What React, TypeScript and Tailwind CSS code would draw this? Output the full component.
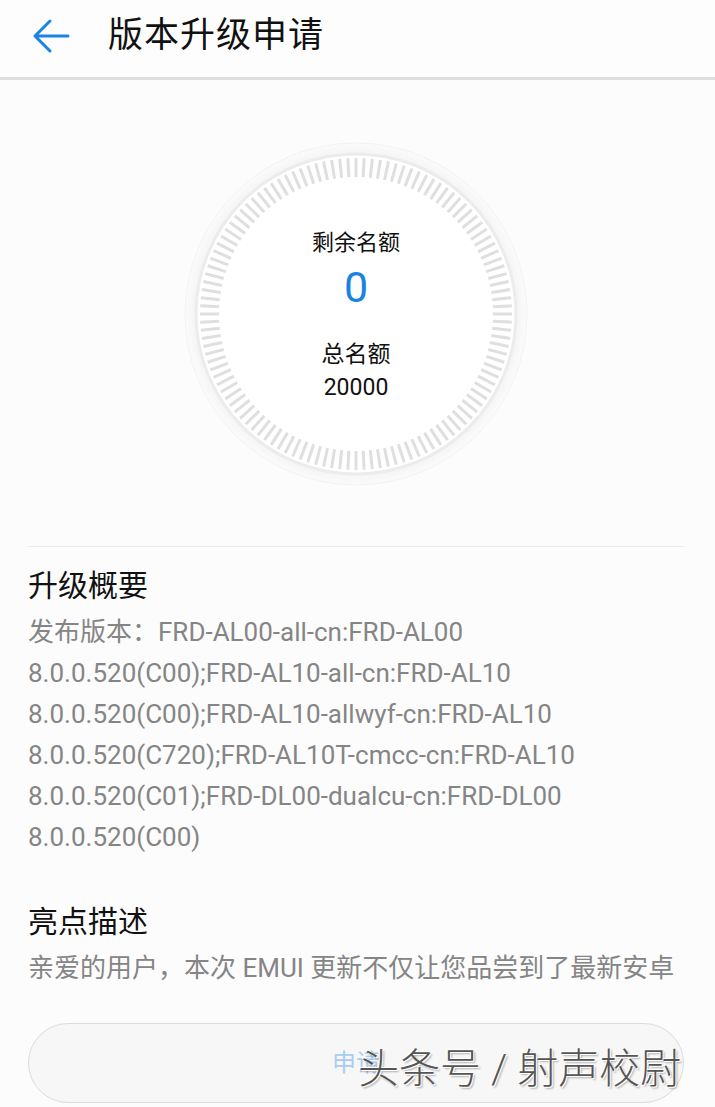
import React from "react";

const FONT = { fontFamily: "Roboto, 'Noto Sans CJK SC', sans-serif" };

const VERSION_LINES = [
  "发布版本：FRD-AL00-all-cn:FRD-AL00",
  "8.0.0.520(C00);FRD-AL10-all-cn:FRD-AL10",
  "8.0.0.520(C00);FRD-AL10-allwyf-cn:FRD-AL10",
  "8.0.0.520(C720);FRD-AL10T-cmcc-cn:FRD-AL10",
  "8.0.0.520(C01);FRD-DL00-dualcu-cn:FRD-DL00",
  "8.0.0.520(C00)",
];

function Dial() {
  const ticks = Array.from({ length: 120 }, (_, i) => i * 3);
  return (
    <svg width="344" height="344" viewBox="0 0 344 344" className="block">
      <defs>
        <radialGradient id="halo" cx="50%" cy="50%" r="50%">
          <stop offset="88%" stopColor="#efefef" />
          <stop offset="94%" stopColor="#f5f5f5" />
          <stop offset="100%" stopColor="#fbfbfb" />
        </radialGradient>
      </defs>
      <circle cx="172" cy="172" r="171" fill="url(#halo)" stroke="#f3f3f3" strokeWidth="1" />
      <circle cx="172" cy="172" r="160" fill="#ffffff" stroke="#ececec" strokeWidth="3" />
      <g stroke="#dfdfdf" strokeWidth="3">
        {ticks.map((deg) => (
          <line
            key={deg}
            x1="172"
            y1="16"
            x2="172"
            y2="35"
            transform={`rotate(${deg} 172 172)`}
          />
        ))}
      </g>
    </svg>
  );
}

export default function App() {
  return (
    <div className="relative h-[1107px] w-[715px] overflow-hidden bg-[#fcfcfc]" style={FONT}>
      {/* Header */}
      <header className="flex h-[80px] items-center border-b-[3px] border-[#dedede] bg-[#fdfdfd] pb-[6px]">
        <svg width="40" height="36" viewBox="0 0 40 36" className="ml-[31px]" fill="none">
          <path d="M37 18H4M19 3L4 18l15 15" stroke="#1a84e6" strokeWidth="3" strokeLinecap="round" strokeLinejoin="round" />
        </svg>
        <h1 className="ml-[37px] text-[35px] leading-none tracking-[1px] text-[#111]">版本升级申请</h1>
      </header>

      {/* Dial */}
      <div className="mt-[62px] flex justify-center">
        <div className="relative ml-[-3px]">
          <Dial />
          <div className="absolute inset-0 flex flex-col items-center pt-[84px] text-[#111]">
            <div className="text-[22px] leading-[34px]">剩余名额</div>
            <div className="text-[43px] leading-[54px] text-[#1a82e2]">0</div>
            <div className="mt-[24px] text-[23px] leading-[34px]">总名额</div>
            <div className="text-[23px] leading-[32px]">20000</div>
          </div>
        </div>
      </div>

      {/* Summary */}
      <div className="ml-[28px] mr-[31px] mt-[60px] border-t border-[#ececec] pt-[19px]">
        <h2 className="text-[30px] leading-[40px] text-[#111]">升级概要</h2>
        <div className="mt-[6px] text-[26px] leading-[41px] text-[#858585]">
          {VERSION_LINES.map((l) => (
            <div key={l}>{l}</div>
          ))}
        </div>

        <h2 className="mt-[44px] text-[30px] leading-[40px] text-[#111]">亮点描述</h2>
        <p className="mt-[6px] whitespace-nowrap text-[26px] leading-[41px] text-[#858585]">
          亲爱的用户，本次 EMUI 更新不仅让您品尝到了最新安卓
        </p>

        <button className="mt-[34px] flex h-[80px] w-full items-center justify-center rounded-full border border-[#dcdcdc] bg-[#f7f7f7] text-[24px] text-[#a8cdf1]">
          申请
        </button>
      </div>

      {/* Watermark */}
      <div
        className="absolute left-[358px] top-[1041px] text-[41px] font-light leading-[56px] text-[#555]"
        style={{ textShadow: "1px 1px 0 #fff, -1px -1px 0 #fff, 2px 2px 2px rgba(0,0,0,0.3)" }}
      >
        头条号 / 射声校尉
      </div>
    </div>
  );
}
